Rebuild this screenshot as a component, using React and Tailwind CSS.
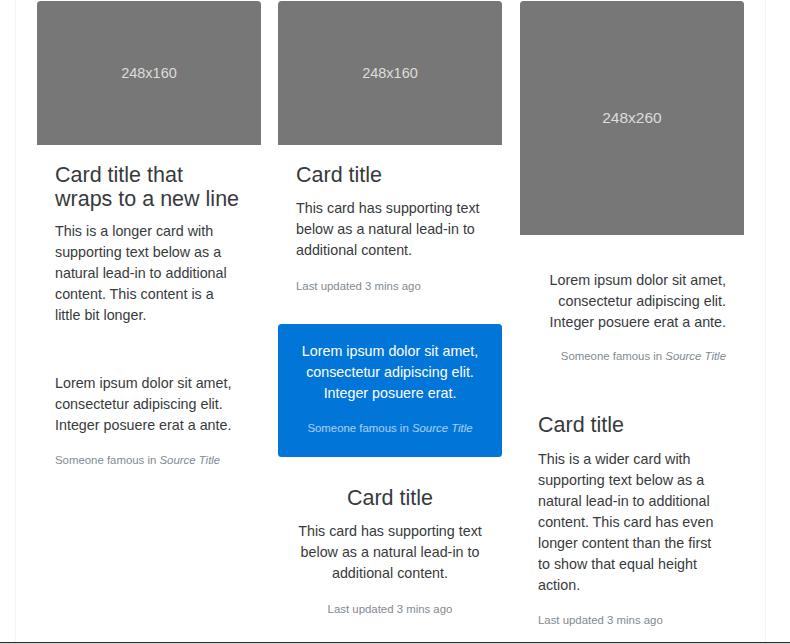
import React from "react";

const Holder = ({ label, h, size }) => (
  <div
    className={`${h} ${size} w-full bg-[#777] rounded-t-[3.5px] flex items-center justify-center text-white/75`}
  >
    {label}
  </div>
);

const Muted = ({ className = "", children }) => (
  <div className={`text-[11.4px] leading-[17px] text-[#818a91] ${className}`}>
    {children}
  </div>
);

const App = () => {
  return (
    <div className="h-[644px] bg-white flex flex-col overflow-hidden font-['Liberation_Sans',Arial,Helvetica,sans-serif] text-[#373a3c]">
      <div className="flex-1 min-h-0 ml-[15px] w-[751px] border-x border-[#f3f3f3] pl-[21px] pt-[0.5px] overflow-hidden">
        <div className="grid grid-cols-[224px_224px_225px] gap-x-[17px] items-start">
          {/* Column 1 */}
          <div className="flex flex-col">
            <div className="mb-[10.5px]">
              <Holder label="248x160" h="h-[144.5px] pt-[3px]" size="text-[14.5px]" />
              <div className="pl-[18px] pr-[20px] pt-[17.5px] pb-[17.5px]">
                <h4 className="text-[21.5px] leading-[24px] mb-[10.5px]">
                  Card title that wraps to a new line
                </h4>
                <p className="text-[14.3px] leading-[21px]">
                  This is a longer card with supporting text below as a natural
                  lead-in to additional content. This content is a little bit
                  longer.
                </p>
              </div>
            </div>
            <div className="pl-[18px] pr-[20px] pt-[19px] pb-[20px] mb-[10.5px]">
              <p className="text-[14.3px] leading-[21px]">
                Lorem ipsum dolor sit amet, consectetur adipiscing elit. Integer
                posuere erat a ante.
              </p>
              <Muted className="mt-[16px]">
                Someone famous in <cite className="italic">Source Title</cite>
              </Muted>
            </div>
          </div>

          {/* Column 2 */}
          <div className="flex flex-col">
            <div className="mb-[10.5px]">
              <Holder label="248x160" h="h-[144.5px] pt-[3px]" size="text-[14.5px]" />
              <div className="pl-[18px] pr-[20px] pt-[17.5px] pb-[16.5px]">
                <h4 className="text-[21.5px] leading-[24px] mb-[11px]">
                  Card title
                </h4>
                <p className="text-[14.3px] leading-[21px]">
                  This card has supporting text below as a natural lead-in to
                  additional content.
                </p>
                <div className="mt-[15px] text-[11.4px] leading-[21px] text-[#818a91]">
                  Last updated 3 mins ago
                </div>
              </div>
            </div>
            <div className="bg-[#0275d8] rounded-[3.5px] px-[18px] pt-[17.5px] pb-[19.5px] mb-[10.5px] text-center">
              <p className="text-[14.3px] leading-[21px] text-white">
                Lorem ipsum dolor sit amet, consectetur adipiscing elit. Integer
                posuere erat.
              </p>
              <div className="mt-[16px] text-[11.4px] leading-[17px] text-white/65">
                Someone famous in <cite className="italic">Source Title</cite>
              </div>
            </div>
            <div className="px-[18px] pt-[18.5px] pb-[17.5px] text-center">
              <h4 className="text-[21.5px] leading-[24px] mb-[11.5px]">
                Card title
              </h4>
              <p className="text-[14.3px] leading-[21px]">
                This card has supporting text below as a natural lead-in to
                additional content.
              </p>
              <div className="mt-[14.5px] text-[11.4px] leading-[21px] text-[#818a91]">
                Last updated 3 mins ago
              </div>
            </div>
          </div>

          {/* Column 3 */}
          <div className="flex flex-col pl-[1px]">
            <div className="mb-[10.5px]">
              <Holder label="248x260" h="h-[234.8px]" size="text-[15.5px]" />
            </div>
            <div className="pl-[18px] pr-[18px] pt-[24px] pb-[20px] mb-[10.5px] text-right">
              <p className="text-[14.3px] leading-[21px]">
                Lorem ipsum dolor sit amet, consectetur adipiscing elit. Integer
                posuere erat a ante.
              </p>
              <Muted className="mt-[15.5px]">
                Someone famous in <cite className="italic">Source Title</cite>
              </Muted>
            </div>
            <div className="pl-[18px] pr-[20px] pt-[17.5px] pb-[17.5px]">
              <h4 className="text-[21.5px] leading-[24px] mb-[11.5px]">
                Card title
              </h4>
              <p className="text-[14.3px] leading-[21px]">
                This is a wider card with supporting text below as a natural
                lead-in to additional content. This card has even longer content
                than the first to show that equal height action.
              </p>
              <div className="mt-[14px] text-[11.4px] leading-[21px] text-[#818a91]">
                Last updated 3 mins ago
              </div>
            </div>
          </div>
        </div>
      </div>
      <div className="h-[2px] shrink-0 border-t border-[#2a2a2a] bg-[#d4d4d4]" />
    </div>
  );
};

export default App;
